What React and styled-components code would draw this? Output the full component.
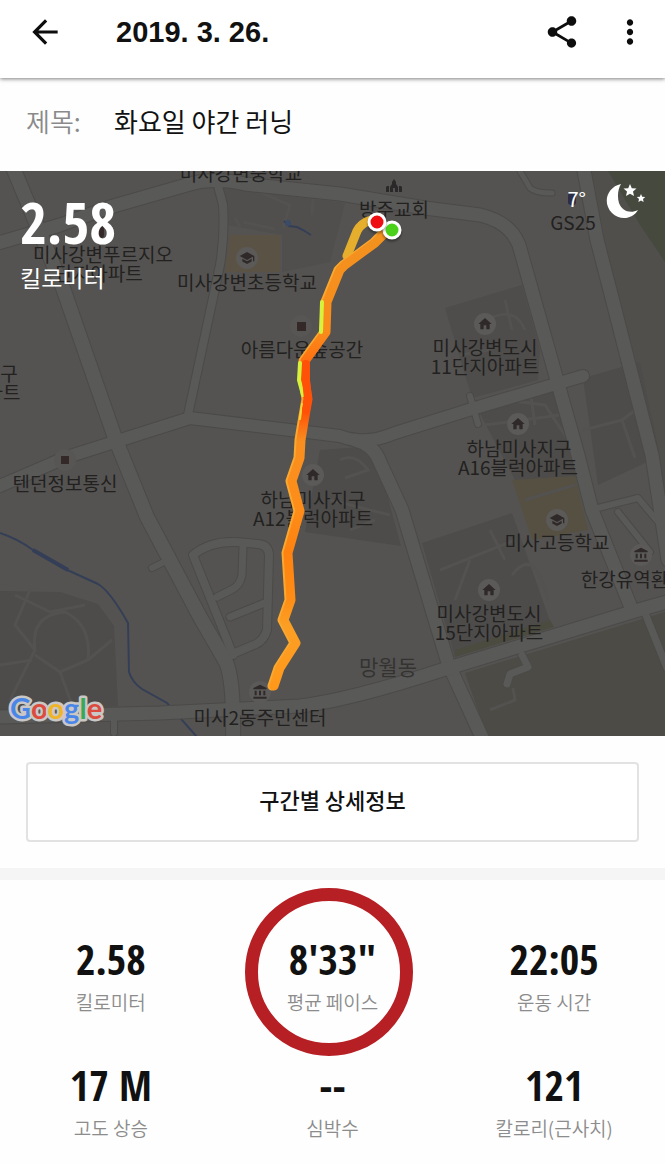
import styled, { createGlobalStyle } from 'styled-components';
import {
	MdAccountBalance,
	MdArrowBack,
	MdHome,
	MdMoreVert,
	MdSchool,
	MdShare,
} from 'react-icons/md';

const stats = [
	{ value: '2.58', label: '킬로미터' },
	{ value: '8\'33"', label: '평균 페이스', circled: true },
	{ value: '22:05', label: '운동 시간' },
	{ value: '17 M', label: '고도 상승' },
	{ value: '--', label: '심박수' },
	{ value: '121', label: '칼로리(근사치)' },
];

const areas = [
	{ fill: '#504f4c', points: '585,171 665,171 665,540' },
	{ fill: '#464a3e', points: '608,171 665,171 665,262 640,225' },
	{ fill: '#504f4d', points: '222,188 345,203 330,262 282,272 282,235 227,225' },
	{ fill: '#5a5245', points: '230,235 280,235 280,272 225,272' },
	{ fill: '#4e4d4b', points: '445,308 522,285 540,350 538,380 472,398' },
	{ fill: '#4d4c4a', points: '478,410 556,388 582,476 515,480' },
	{ fill: '#565043', points: '512,480 575,476 588,530 532,540' },
	{ fill: '#4d4c4a', points: '583,378 640,362 660,456 598,485' },
	{ fill: '#4d4c4a', points: '320,450 374,446 401,546 305,532' },
	{ fill: '#4d4c4b', points: '422,543 512,513 552,627 455,657' },
	{ fill: '#4c4b40', points: '455,650 550,620 554,627 455,657' },
	{ fill: '#4c4b45', points: '465,673 665,612 665,736 487,736' },
	{ fill: '#4d4c4a', points: '0,591 60,592 98,604 114,626 118,706 0,712' },
];

const roads = [
	{ width: 8, d: 'M217 182L223 205Q225 235 220 265L188 415' },
	{ width: 8, d: 'M233 655L193 555Q210 541 235 542L258 544Q269 545 269 556L267 630Q264 640 256 644L230 655' },
	{ width: 7, d: 'M243 547L242 575Q240 586 231 590L217 597M230 617L267 602' },
	{ width: 6, d: 'M470 396L478 424M162 563L152 568' },
	{ width: 7, d: 'M645 613L667 668' },
	{ width: 6, d: 'M598 508L638 498L665 530M618 512L650 552' },
	{ width: 5, d: 'M520 171L530 188Q535 193 552 193' },
	{ width: 7, d: 'M522 655L528 667L510 674L507 684' },
	{ width: 13, d: 'M-5 244L60 225L110 207L190 184Q215 177 245 184L340 194L425 208L480 215Q510 222 519 245L578 455L592 510L632 610' },
	{ width: 14, d: 'M12 165L63 288L115 438L147 517L200 617L226 662Q234 680 233 740' },
	{ width: 12, d: 'M-5 488L67 457L190 418L340 436Q365 446 395 433L475 408L583 376' },
	{ width: 13, d: 'M355 440Q374 445 380 462L402 510L448 663L484 742' },
	{ width: 13, d: 'M583 165L597 240L612 298L652 455L668 560' },
	{ width: 13, d: 'M-5 717L160 713L300 706Q350 700 442 670L635 611L670 601' },
	{ width: 6, d: 'M114 720V733' },
];

const lanes = [
	'M30 590L15 625L35 650L10 700M35 650Q30 615 65 612Q92 625 88 660L60 672L35 655',
	'M15 595L50 612L85 605M88 660L112 640M60 672L72 705M0 665L32 660',
	'M235 218L240 227M243 222L275 229M313 195L312 215M255 190L290 205L283 228',
	'M583 430L622 420L645 403M622 420L635 458',
	'M505 400L545 405L568 440M530 390L535 425M485 425L560 415',
	'M340 460Q355 452 368 470L345 478M330 500L390 515M350 530L375 520',
	'M440 570L515 540M455 600L470 560M490 530L505 560M512 575Q535 545 548 600M525 500L575 485',
	'M487 320Q515 305 525 330M505 300L512 330M460 355L490 350',
	'M490 710L515 700L513 688',
];

const labels = [
	{ x: 241, y: 181, text: '미사강변중학교' },
	{ x: 394, y: 217, text: '방주교회' },
	{ x: 573, y: 230, text: 'GS25' },
	{ x: 103, y: 262, text: '미사강변푸르지오' },
	{ x: 99, y: 281, text: '단지아파트' },
	{ x: 247, y: 290, text: '미사강변초등학교' },
	{ x: 302, y: 357, text: '아름다운숲공간' },
	{ x: 9, y: 381, text: '구' },
	{ x: 3, y: 400, text: '파트' },
	{ x: 485, y: 355, text: '미사강변도시' },
	{ x: 485, y: 374, text: '11단지아파트' },
	{ x: 519, y: 456, text: '하남미사지구' },
	{ x: 518, y: 475, text: 'A16블럭아파트' },
	{ x: 65, y: 491, text: '텐던정보통신' },
	{ x: 313, y: 507, text: '하남미사지구' },
	{ x: 313, y: 526, text: 'A12블럭아파트' },
	{ x: 557, y: 550, text: '미사고등학교' },
	{ x: 642, y: 587, text: '한강유역환경청' },
	{ x: 489, y: 621, text: '미사강변도시' },
	{ x: 489, y: 640, text: '15단지아파트' },
	{ x: 388, y: 675, text: '망월동', district: true },
	{ x: 260, y: 725, text: '미사2동주민센터' },
];

const places = [
	{ icon: MdSchool, x: 247, y: 258 },
	{ icon: MdSchool, x: 557, y: 520 },
	{ icon: MdHome, x: 485, y: 324 },
	{ icon: MdHome, x: 518, y: 424 },
	{ icon: MdHome, x: 313, y: 475 },
	{ icon: MdHome, x: 489, y: 590 },
	{ icon: MdAccountBalance, x: 260, y: 692 },
	{ icon: MdAccountBalance, x: 641, y: 555 },
];

const googleLetters = [
	['G', '#4a86e8'],
	['o', '#dd4b3e'],
	['o', '#f0b429'],
	['g', '#4a86e8'],
	['l', '#3aa757'],
	['e', '#dd4b3e'],
];

const route =
	'M387 231L375 243L345 265L340 270L327 302L326 332L305 361V380L308 399L305 416L301 440L300 458L292 481L300 511L288 553L291 600L284 620L296 643L280 668L274 686';

const RouteMap = () => (
	<MapDrawing viewBox="0 171 665 565" role="img" aria-label="러닝 경로">
		<defs>
			<linearGradient id="pace" gradientUnits="userSpaceOnUse" x1="0" y1="230" x2="0" y2="690">
				<stop offset="0" stopColor="#f2921f" />
				<stop offset="0.22" stopColor="#f98c1b" />
				<stop offset="0.28" stopColor="#ff7212" />
				<stop offset="0.32" stopColor="#ff5208" />
				<stop offset="0.4" stopColor="#ff5608" />
				<stop offset="0.46" stopColor="#f98f20" />
				<stop offset="0.6" stopColor="#fd8d19" />
				<stop offset="0.7" stopColor="#ff8210" />
				<stop offset="0.8" stopColor="#ff8c14" />
				<stop offset="0.86" stopColor="#fb9f24" />
				<stop offset="1" stopColor="#ff981a" />
			</linearGradient>
		</defs>

		<rect y="171" width="665" height="565" fill="#545351" />
		{areas.map((area) => (
			<polygon key={area.points} {...area} />
		))}
		{lanes.map((d) => (
			<Lane key={d} d={d} />
		))}

		<River d="M0 533Q18 539 33 550L63 568L98 584Q110 591 128 623L129 672Q132 682 142 689L167 703L197 737" />
		<River $wide d="M33 550L68 570" />
		<River d="M284 221L289 226L297 227L303 230L311 235" />
		<circle cx="288" cy="223" r="3" fill="#3b4a68" />

		{roads.map(({ d, width }) => (
			<Road key={d} d={d} stroke="#4b4a48" strokeWidth={width + 2} />
		))}
		{roads.map(({ d, width }) => (
			<Road key={d} d={d} stroke="#595958" strokeWidth={width} />
		))}

		{places.map(({ icon: Icon, x, y }) => (
			<g key={`${x}-${y}`} color="#2f2a29">
				<circle cx={x} cy={y} r="11" fill="#5b5a58" />
				<Icon x={x - 8} y={y - 8} size={16} />
			</g>
		))}
		<circle cx="301" cy="326" r="11" fill="#575654" />
		<rect x="297" y="322" width="9" height="9" fill="#352828" />
		<circle cx="65" cy="460" r="11" fill="#575654" />
		<rect x="61" y="456" width="8" height="8" fill="#352828" />
		<rect x="96" y="226" width="8" height="12" rx="3" fill="#352828" />
		<rect x="568" y="193" width="8" height="12" rx="3" fill="#2d2d45" />
		<path
			d="M394 179L396 182V184L398 187V192H395V188H393V192H390V187L392 184V182ZM387 186H389V192H386V187ZM400 186H401L402 187V192H399V186Z"
			fill="#2a2828"
		/>

		{labels.map(({ x, y, text, district }) => (
			<PlaceName key={`${x}-${y}`} x={x} y={y} $district={district}>
				{text}
			</PlaceName>
		))}

		<Track d="M347 256L357 231Q361 223 371 220" stroke="#e6ae2d" strokeWidth="9" />
		<Track d={route} stroke="#f9a830" strokeWidth="9" transform="translate(-2 0)" />
		<Track d={route} stroke="url(#pace)" strokeWidth="9" />
		<Track d="M322 302L321 332M300 363L299 380L303 395" stroke="#d6f23c" strokeWidth="4" />
		<Track d="M302 404L300 419" stroke="#f4d83c" strokeWidth="2" />
		<Track d="M306 364V380L308 399L306 410" stroke="#ff5208" strokeWidth="8" />

		<Marker cx="392" cy="230" r="8" fill="#4cd11b" />
		<Marker cx="377" cy="222" r="8" fill="#ee0d10" />

		<GoogleMark x="10" y="719">
			{googleLetters.map(([letter, color], i) => (
				<tspan key={i} fill={color}>
					{letter}
				</tspan>
			))}
		</GoogleMark>
	</MapDrawing>
);

const Night = () => (
	<svg width="40" height="36" viewBox="0 0 40 36" fill="#fff" aria-hidden="true">
		<path d="M15 1C1 4-4 20 6 30C14 38 27 36 32 27C24 31 16 28 13 20C11 13 12 6 15 1Z" />
		<path d="M24 1L25.800 5.200L30.500 5.600L27 8.600L28 13L24 10.700L20 13L21 8.600L17.500 5.600L22.200 5.200Z" />
		<path d="M35 11L36.200 13.800L39.200 14.100L37 16.100L37.600 19L35 17.500L32.400 19L33 16.100L30.800 14.100L33.800 13.800Z" />
	</svg>
);

const App = () => {
	return (
		<Page>
			<GlobalStyle />
			<Header>
				<IconButton aria-label="뒤로">
					<MdArrowBack />
				</IconButton>
				<HeaderDate>2019. 3. 26.</HeaderDate>
				<Actions>
					<IconButton aria-label="공유">
						<MdShare />
					</IconButton>
					<IconButton aria-label="더보기">
						<MdMoreVert />
					</IconButton>
				</Actions>
			</Header>

			<TitleRow>
				<TitleLabel htmlFor="title">제목:</TitleLabel>
				<TitleInput id="title" defaultValue="화요일 야간 러닝" />
			</TitleRow>

			<MapPanel>
				<RouteMap />
				<Distance>
					<DistanceValue>2.58</DistanceValue>
					<DistanceUnit>킬로미터</DistanceUnit>
				</Distance>
				<Weather>
					<span>7°</span>
					<Night />
				</Weather>
			</MapPanel>

			<Details>
				<DetailButton>구간별 상세정보</DetailButton>
			</Details>

			<Stats>
				{stats.map(({ value, label, circled }) => (
					<Stat key={label}>
						<StatValue>{value}</StatValue>
						<StatLabel>{label}</StatLabel>
						{circled && <Ring />}
					</Stat>
				))}
			</Stats>
		</Page>
	);
};

export default App;

const GlobalStyle = createGlobalStyle`
	* {
		box-sizing: border-box;
	}

	body {
		margin: 0;
		background-color: #fefefe;
		color: #111;
		font-family: 'Noto Sans CJK KR', sans-serif;
	}
`;

const Page = styled.main`
	overflow-x: hidden;
`;

const Header = styled.header`
	position: relative;
	display: flex;
	align-items: center;
	height: 78px;
	padding: 0 16px 14px 26px;
	background-color: white;
	box-shadow: 0 1px 4px rgba(0, 0, 0, 0.5);
`;

const IconButton = styled.button`
	display: flex;
	padding: 0;
	border: 0;
	background: none;
	color: #0d0d0d;
	font-size: 38px;
	cursor: pointer;
`;

const HeaderDate = styled.h1`
	flex: 1;
	margin: 0 0 0 52px;
	font: bold 29px 'Liberation Sans', sans-serif;
`;

const Actions = styled.div`
	display: flex;
	gap: 30px;
`;

const TitleRow = styled.div`
	display: flex;
	align-items: center;
	height: 93px;
	padding: 0 26px 8px;
	font-size: 26px;
`;

const TitleLabel = styled.label`
	width: 88px;
	color: #8a8a8a;
	font-weight: 350;
`;

const TitleInput = styled.input`
	flex: 1;
	min-width: 0;
	padding: 0;
	border: 0;
	outline: 0;
	background: none;
	color: #111;
	font: inherit;
`;

const MapPanel = styled.section`
	position: relative;
	color: white;
`;

const MapDrawing = styled.svg`
	display: block;
	width: 100%;
`;

const Lane = styled.path`
	fill: none;
	stroke: #535250;
	stroke-width: 3px;
`;

const River = styled.path`
	fill: none;
	stroke: #343f57;
	stroke-width: ${({ $wide }) => ($wide ? '4px' : '2px')};
`;

const Road = styled.path`
	fill: none;
	stroke-linejoin: round;
	stroke-linecap: round;
`;

const PlaceName = styled.text`
	fill: ${({ $district }) => ($district ? '#343332' : '#222120')};
	font-size: ${({ $district }) => ($district ? '21px' : '19px')};
	text-anchor: middle;
`;

const Track = styled.path`
	fill: none;
	stroke-linejoin: round;
	stroke-linecap: round;
`;

const Marker = styled.circle`
	stroke: white;
	stroke-width: 3px;
	filter: drop-shadow(0 2px 1px rgba(0, 0, 0, 0.4));
`;

const GoogleMark = styled.text`
	font: bold 29px Lato, sans-serif;
	stroke: #c9c8c7;
	stroke-width: 5px;
	stroke-linejoin: round;
	paint-order: stroke;
`;

const Distance = styled.div`
	position: absolute;
	top: 18px;
	left: 20px;
`;

const DistanceValue = styled.div`
	padding-bottom: 6px;
	font: bold 58px/66px 'Open Sans Condensed', 'Roboto Condensed', sans-serif;
`;

const DistanceUnit = styled.div`
	font-size: 23px;
	line-height: 32px;
`;

const Weather = styled.div`
	position: absolute;
	top: 12px;
	right: 19px;
	display: flex;
	gap: 20px;
	font-size: 20px;
	line-height: 32px;
`;

const Details = styled.section`
	padding: 26px;
	border-bottom: 12px solid #f5f5f5;
`;

const DetailButton = styled.button`
	display: block;
	width: 100%;
	height: 80px;
	padding-bottom: 8px;
	border: 2px solid #e2e2e2;
	border-radius: 4px;
	background-color: white;
	color: #111;
	font: 500 22px 'Noto Sans CJK KR', sans-serif;
	cursor: pointer;
`;

const Stats = styled.section`
	display: grid;
	grid-template-columns: repeat(3, 1fr);
	row-gap: 44px;
	padding: 54px 0 20px;
`;

const Stat = styled.div`
	position: relative;
	text-align: center;
`;

const StatValue = styled.div`
	padding-bottom: 4px;
	font: bold 42px/50px 'Open Sans Condensed', 'Roboto Condensed', sans-serif;
`;

const StatLabel = styled.div`
	color: #8c8c8c;
	font-size: 19px;
	font-weight: 350;
	line-height: 28px;
`;

const Ring = styled.div`
	position: absolute;
	top: -46px;
	left: calc(50% - 87px);
	width: 168px;
	height: 168px;
	border: 13px solid #b61f24;
	border-radius: 50%;
`;
